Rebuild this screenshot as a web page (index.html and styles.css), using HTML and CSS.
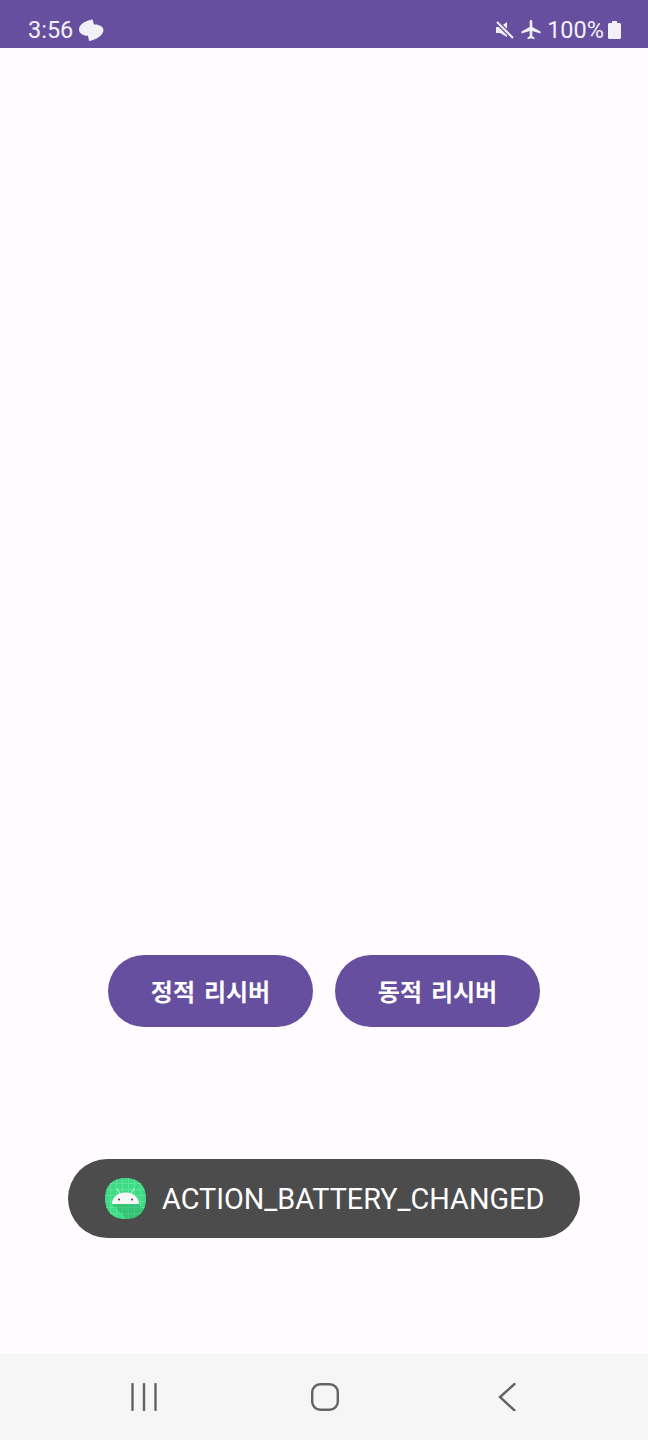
FILE: index.html
```html
<!DOCTYPE html>
<html lang="ko">
<head>
<meta charset="utf-8">
<title>Receiver</title>
<link rel="stylesheet" href="styles.css">
</head>
<body>
<div class="screen">
  <header class="status">
    <div class="status-side">
      <span class="time">3:56</span>
      <svg class="ic-cloud" viewBox="0 0 26 24"><path d="M14.500 1.500C8 2.500 1 6 1 11.500C1 15.500 5.500 18 10 17.800L11 23C18 22 25.500 17 25.500 12C25.500 8.500 20.500 6 16 6.500Z" fill="#f3f1f8"/></svg>
    </div>
    <div class="status-side">
      <svg class="ic-mute" viewBox="0 0 19 18"><path d="M1 6H5L12 1V16L5 12H1Z" fill="#f3f1f8"/><path d="M1 0L19 18" stroke="#674f9f" stroke-width="4.500"/><path d="M2 1L18 17" stroke="#f3f1f8" stroke-width="2"/></svg>
      <svg class="ic-plane" viewBox="0 0 20 20"><path d="M8.700 1.500C8.700.6 9.300 0 10 0S11.300.6 11.300 1.500V7L19.500 11.500V13.500L11.300 11V16L13.500 17.700V19.300L10 18.300L6.500 19.300V17.700L8.700 16V11L.5 13.500V11.500L8.700 7Z" fill="#f3f1f8"/></svg>
      <span class="pct">100%</span>
      <svg class="ic-batt" viewBox="0 0 13 18"><path d="M4 0H9V2H11.500C12.300 2 13 2.700 13 3.500V16.500C13 17.300 12.300 18 11.500 18H1.500C.7 18 0 17.300 0 16.500V3.500C0 2.700.7 2 1.500 2H4Z" fill="#f3f1f8"/></svg>
    </div>
  </header>
  <main class="content">
    <div class="buttons">
      <button class="btn">정적 리시버</button>
      <button class="btn">동적 리시버</button>
    </div>
    <div class="toast">
      <svg class="app-icon" viewBox="0 0 41 41">
        <defs><clipPath id="squircle"><path d="M20.500 0C33.500 0 41 7.500 41 20.500S33.500 41 20.500 41S0 33.500 0 20.500S7.500 0 20.500 0Z"/></clipPath></defs>
        <g clip-path="url(#squircle)">
          <rect width="41" height="41" fill="#3ddc84"/>
          <path d="M0 5.500H41M0 11.500H41M0 17.500H41M0 23.500H41M0 29.500H41M0 35.500H41M5.500 0V41M11.500 0V41M17.500 0V41M23.500 0V41M29.500 0V41M35.500 0V41" stroke="#62e39d" stroke-width=".8"/>
          <path d="M7 26H33L48 41V48H29Z" fill="#1f8f55" opacity=".3"/>
        </g>
        <path d="M7 26C7 19 13 14.500 20.500 14.500S34 19 34 26Z" fill="#f6f7f6"/>
        <path d="M12 10.500L15.500 16.500M29 10.500L25.500 16.500" stroke="#e6f7ec" stroke-width=".9"/>
        <circle cx="14" cy="21.500" r="1" fill="#3c3c3c"/>
        <circle cx="27" cy="21.500" r="1" fill="#3c3c3c"/>
      </svg>
      <span class="toast-text">ACTION_BATTERY_CHANGED</span>
    </div>
  </main>
  <nav class="navbar">
    <svg class="nav-recent" viewBox="0 0 26 28"><path d="M1.500 1V27M13 1V27M24.500 1V27" stroke="#636363" stroke-width="2.400" stroke-linecap="round"/></svg>
    <svg class="nav-home" viewBox="0 0 28 28"><rect x="1.200" y="1.200" width="25.600" height="25.600" rx="8" fill="none" stroke="#636363" stroke-width="2.400"/></svg>
    <svg class="nav-back" viewBox="0 0 28 28"><path d="M20.500 1L6 14L20.500 27.500" fill="none" stroke="#636363" stroke-width="2.400" stroke-linecap="round" stroke-linejoin="miter"/></svg>
  </nav>
</div>
</body>
</html>
```
FILE: styles.css
```css
* { box-sizing: border-box; }
html, body { margin: 0; padding: 0; }
body { font-family: Roboto, "Noto Sans CJK KR", sans-serif; background: #fffbff; }
.screen { width: 648px; height: 1440px; display: flex; flex-direction: column; overflow: hidden; }
.status { height: 48px; flex: none; background: #674f9f; color: #f3f1f8; display: flex; justify-content: space-between; align-items: center; padding: 12px 27px 0 28px; font-size: 23.500px; }
.status-side { display: flex; align-items: center; }
.ic-cloud { width: 26px; height: 24px; margin-left: 5px; }
.ic-mute { width: 19px; height: 18px; margin-right: 7px; }
.ic-plane { width: 20px; height: 20px; margin-right: 6px; }
.ic-batt { width: 13px; height: 18px; margin-left: 4px; }
.content { flex: 1; display: flex; flex-direction: column; align-items: center; padding-top: 907px; }
.buttons { display: flex; gap: 22px; }
.btn { width: 205px; height: 72px; border: 0; border-radius: 36px; background: #674f9f; color: #fff; font-family: Roboto, "Noto Sans CJK KR", sans-serif; font-size: 24px; font-weight: 700; word-spacing: 3px; padding: 0 0 2px; }
.toast { margin-top: 132px; width: 512px; height: 79px; border-radius: 40px; background: #4c4c4c; display: flex; align-items: center; padding-left: 37px; color: #fff; }
.app-icon { width: 41px; height: 41px; flex: none; }
.toast-text { margin-left: 16px; font-size: 28.800px; white-space: nowrap; }
.navbar { height: 86px; flex: none; background: #f6f6f6; display: flex; align-items: center; padding: 0 0 0 131px; }
.nav-recent { width: 26px; height: 28px; }
.nav-home { width: 28px; height: 28px; margin-left: 154px; }
.nav-back { width: 28px; height: 28px; margin-left: 155px; }
```
